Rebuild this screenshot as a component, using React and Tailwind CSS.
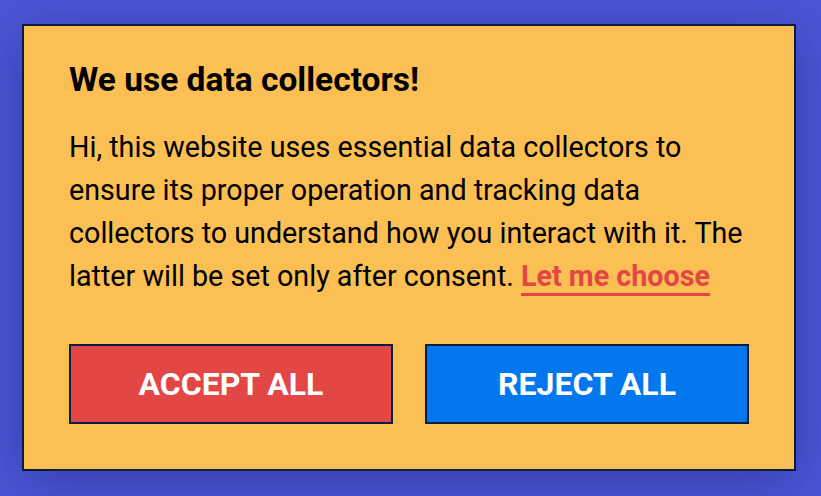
const App = () => {
  return (
    <div
      className="flex h-screen w-full items-center justify-center bg-[#4c56d6]"
      style={{ fontFamily: 'Roboto, "Liberation Sans", sans-serif' }}
    >
      <div className="mr-[3px] mb-[2px] w-[774px] border-2 border-[#0b1d3d] bg-[#fbbf53] px-[45px] pt-[36px] pb-[45px] shadow-[0_10px_50px_rgba(30,30,110,0.45)]">
        {/* Title */}
        <h2 className="text-[33.5px] font-bold leading-[36px] text-black">We use data collectors!</h2>

        {/* Body */}
        <p className="mt-[28px] text-[28.7px] leading-[43px] text-black">
          Hi, this website uses essential data collectors to ensure its proper operation and tracking data
          collectors to understand how you interact with it. The latter will be set only after consent.{' '}
          <a
            href="#"
            className="font-bold text-[#e34745] underline decoration-[2.5px] underline-offset-[7px]"
          >
            Let me choose
          </a>
        </p>

        {/* Buttons */}
        <div className="mt-[46px] flex gap-8">
          <button className="h-[80px] flex-1 border-2 border-[#0b1d3d] bg-[#e34745] text-[32px] font-bold text-white">
            ACCEPT ALL
          </button>
          <button className="h-[80px] flex-1 border-2 border-[#0b1d3d] bg-[#0277ee] text-[32px] font-bold text-white">
            REJECT ALL
          </button>
        </div>
      </div>
    </div>
  );
};

export default App;
